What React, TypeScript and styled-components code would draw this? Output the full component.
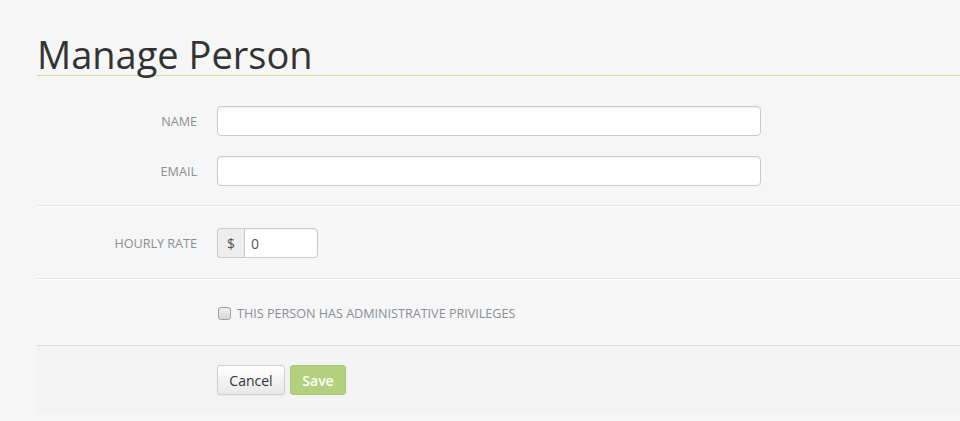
import React from "react";
import styled, { createGlobalStyle } from "styled-components";

const Global = createGlobalStyle`
  html, body { margin: 0; padding: 0; }
  body {
    background: #f6f6f6;
    font-family: "Open Sans", "Liberation Sans", sans-serif;
    color: #333;
  }
`;

const Page = styled.div`
  padding: 0 0 0 37px;
`;

const Title = styled.h1`
  margin: 0;
  padding-top: 34px;
  font-size: 38px;
  font-weight: 400;
  line-height: 40px;
  color: #333;
  border-bottom: 1px solid #c6de9c;
  box-sizing: border-box;
  height: 76px;
`;

const Section = styled.div<{ $pt: number; $pb: number; $last?: boolean }>`
  padding: ${(p) => p.$pt}px 0 ${(p) => p.$pb}px;
  border-bottom: ${(p) => (p.$last ? "none" : "1px solid #e4e4e4")};
  box-shadow: ${(p) => (p.$last ? "none" : "0 1px 0 #fff")};
  display: flex;
  flex-direction: column;
  gap: 20px;
`;

const Row = styled.div`
  display: grid;
  grid-template-columns: 160px 1fr;
  column-gap: 20px;
  align-items: center;
  height: 30px;
`;

const Label = styled.label`
  text-align: right;
  font-size: 12.6px;
  color: #8a8e96;
  text-transform: uppercase;
`;

const TextInput = styled.input`
  box-sizing: border-box;
  width: 544px;
  height: 30px;
  border: 1px solid #c9c9c9;
  border-radius: 4px;
  background: #fff;
  box-shadow: inset 0 1px 1px rgba(0, 0, 0, 0.06);
  font-family: inherit;
  font-size: 14px;
  padding: 0 8px;
  outline: none;
`;

const Group = styled.div`
  display: flex;
  width: 101px;
  height: 30px;
`;

const Addon = styled.span`
  box-sizing: border-box;
  width: 27px;
  display: flex;
  align-items: center;
  justify-content: center;
  background: #eee;
  border: 1px solid #c9c9c9;
  border-right: none;
  border-radius: 4px 0 0 4px;
  font-size: 14px;
  color: #555;
`;

const RateInput = styled(TextInput)`
  width: 74px;
  border-radius: 0 4px 4px 0;
  padding: 0 6px;
  color: #555;
`;

const CheckRow = styled.label`
  margin-left: 180px;
  display: flex;
  align-items: center;
  gap: 6px;
  height: 13px;
  font-size: 12.6px;
  color: #8a8e96;
  text-transform: uppercase;
`;

const Box = styled.span`
  box-sizing: border-box;
  width: 13px;
  height: 13px;
  border: 1px solid #a0a0a0;
  border-radius: 3px;
  background: linear-gradient(#f0f0f0, #d8d8d8);
  margin-left: 1px;
`;

const Footer = styled.div`
  border-top: 1px solid #dedede;
  background: #f3f3f3;
  height: 68px;
  padding-left: 180px;
  display: flex;
  align-items: center;
  gap: 5px;
`;

const Button = styled.button<{ $primary?: boolean }>`
  height: 30px;
  box-sizing: border-box;
  padding: 0;
  font-family: inherit;
  font-size: 14px;
  border-radius: 3px;
  cursor: pointer;
  ${(p) =>
    p.$primary
      ? `
    background: #b2d07d;
    border: 1px solid #a8c673;
    color: #fff;
    font-weight: 600;
    width: 56px;
  `
      : `
    background: linear-gradient(#ffffff, #e8e8e8);
    border: 1px solid #cfcfcf;
    color: #333;
    width: 68px;
    box-shadow: 0 1px 1px rgba(0,0,0,0.05);
  `}
`;

export default function App() {
  return (
    <Page>
      <Global />
      <Title>Manage Person</Title>
      <Section $pt={30} $pb={19}>
        <Row>
          <Label>Name</Label>
          <TextInput />
        </Row>
        <Row>
          <Label>Email</Label>
          <TextInput />
        </Row>
      </Section>
      <Section $pt={22} $pb={20}>
        <Row>
          <Label>Hourly Rate</Label>
          <Group>
            <Addon>$</Addon>
            <RateInput defaultValue="0" />
          </Group>
        </Row>
      </Section>
      <Section $pt={28} $pb={25} $last>
        <CheckRow>
          <Box />
          This person has administrative privileges
        </CheckRow>
      </Section>
      <Footer>
        <Button>Cancel</Button>
        <Button $primary>Save</Button>
      </Footer>
    </Page>
  );
}
